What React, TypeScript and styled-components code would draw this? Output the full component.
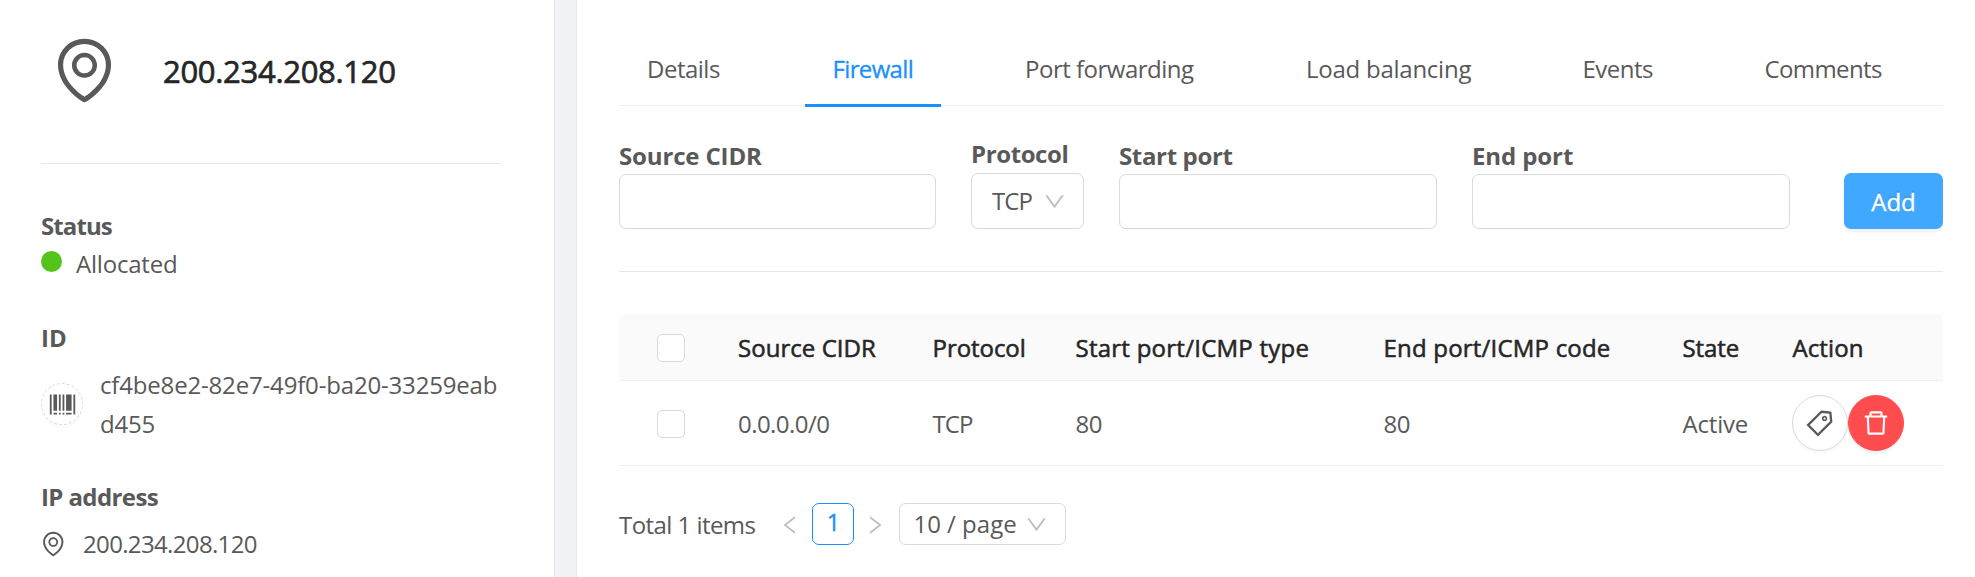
import React from 'react';
import styled, { createGlobalStyle, css } from 'styled-components';
import {
  AiOutlineBarcode,
  AiOutlineDelete,
  AiOutlineDown,
  AiOutlineEnvironment,
  AiOutlineLeft,
  AiOutlineRight,
  AiOutlineTag,
} from 'react-icons/ai';

const text = '#595959';
const heading = '#262626';
const primary = '#1890ff';
const border = '#d9d9d9';
const split = '#e8e8e8';

const GlobalStyle = createGlobalStyle`
  * { box-sizing: border-box; }
  body {
    margin: 0;
    background: #f0f2f5;
    color: ${text};
    font: 400 24px/38px 'Open Sans', 'Noto Sans', sans-serif;
    overflow: hidden;
  }
  svg { display: block; flex: none; }
`;

/* The family has no 500 face, so medium text is the regular one with a thin stroke. */
const medium = css`
  -webkit-text-stroke: 0.55px currentColor;
`;

const Page = styled.div`
  display: flex;
  height: 577px;
`;

const Sidebar = styled.aside`
  width: 555px;
  padding: 39px 53px 0 41px;
  background: #fff;
  border-right: 1px solid ${split};
`;

const Main = styled.main`
  flex: 1;
  margin-left: 21px;
  padding: 0 32px 0 42px;
  background: #fff;
  border-left: 1px solid ${split};
`;

const Text = styled.span<{ $track?: number }>`
  letter-spacing: ${(p) => p.$track ?? 0}px;
  white-space: nowrap;
`;

const ResourceHeader = styled.header`
  display: flex;
  gap: 42px;
  height: 125px;
  padding-left: 7px;
  border-bottom: 1px solid ${split};
`;

const ResourceIcon = styled.div`
  margin-top: -5px;
`;

const ResourceName = styled.h1`
  margin: 11px 0 0;
  color: ${heading};
  font-size: 31px;
  font-weight: 400;
  line-height: 42px;
  letter-spacing: -0.3px;
  -webkit-text-stroke: 0.7px currentColor;
`;

const Section = styled.section<{ $top: number }>`
  padding-top: ${(p) => p.$top}px;
`;

const SectionTitle = styled.h2<{ $track?: number }>`
  margin: 0;
  font-size: 24px;
  font-weight: 700;
  line-height: 38px;
  letter-spacing: ${(p) => p.$track ?? 0}px;
`;

const SectionRow = styled.div<{ $gap: number; $top?: number }>`
  display: flex;
  align-items: center;
  gap: ${(p) => p.$gap}px;
  margin-top: ${(p) => p.$top ?? 0}px;
`;

const StatusDot = styled.i`
  width: 21px;
  height: 21px;
  margin-bottom: 5px;
  border-radius: 50%;
  background: #52c41a;
`;

const BarcodeButton = styled.button`
  display: flex;
  align-items: center;
  justify-content: center;
  flex: none;
  width: 42px;
  height: 42px;
  padding: 0;
  border: 1px dashed ${border};
  border-radius: 50%;
  background: #fff;
  color: ${text};
  box-shadow: 0 3px 0 rgba(0, 0, 0, 0.015);
`;

const IdText = styled.div`
  line-height: 39px;
  letter-spacing: -0.17px;
  white-space: nowrap;
`;

const Tabs = styled.nav`
  display: grid;
  grid-template-columns: 185.5px 192.5px 281px 276.5px 182px 1fr;
  height: 106px;
  border-bottom: 1px solid #f0f0f0;
`;

const Tab = styled.a<{ $active?: boolean; $track: number }>`
  justify-self: start;
  height: 107px;
  padding: 50px 28px 0;
  letter-spacing: ${(p) => p.$track}px;
  white-space: nowrap;
  ${(p) =>
    p.$active &&
    css`
      color: ${primary};
      border-bottom: 3px solid ${primary};
      -webkit-text-stroke: 0.3px currentColor;
    `}
`;

const RuleForm = styled.form`
  display: grid;
  grid-template-columns: 317px 113px 318px 318px 99px;
  column-gap: 35px;
  align-items: end;
  height: 166px;
  padding-bottom: 42px;
  border-bottom: 1px solid ${split};
`;

const Field = styled.label`
  display: block;
`;

const FieldLabel = styled.div<{ $track?: number; $height?: number }>`
  height: ${(p) => p.$height ?? 37}px;
  font-weight: 700;
  letter-spacing: ${(p) => p.$track ?? 0}px;
  white-space: nowrap;
`;

const TextInput = styled.input`
  display: block;
  width: 100%;
  height: 55px;
  border: 1px solid ${border};
  border-radius: 7px;
  background: #fff;
`;

const Select = styled.div<{ $small?: boolean }>`
  display: flex;
  align-items: center;
  justify-content: space-between;
  height: ${(p) => (p.$small ? 42 : 56)}px;
  width: ${(p) => (p.$small ? '167px' : 'auto')};
  padding: ${(p) => (p.$small ? '0 16px 0 13px' : '0 16px 0 20px')};
  border: 1px solid ${border};
  border-radius: 7px;
  background: #fff;
  svg { color: #bfbfbf; }
`;

const AddButton = styled.button`
  width: 99px;
  height: 56px;
  margin-left: 19px;
  padding: 1px 0 0;
  border: 0;
  border-radius: 7px;
  background: #40a9ff;
  color: #fff;
  font: inherit;
  -webkit-text-stroke: 0.3px #fff;
  text-shadow: 0 -2px 0 rgba(0, 0, 0, 0.12);
  box-shadow: 0 3.5px 0 rgba(0, 0, 0, 0.045);
`;

const Table = styled.div`
  margin-top: 42px;
`;

const Row = styled.div<{ $head?: boolean }>`
  display: grid;
  grid-template-columns: 81px 194.5px 143px 308px 299px 110px 1fr;
  align-items: center;
  height: ${(p) => (p.$head ? 67 : 85)}px;
  padding: 2px 0 0 38px;
  border-bottom: 1px solid #f0f0f0;
  ${(p) =>
    p.$head &&
    css`
      background: #fafafa;
      color: ${heading};
      border-radius: 7px 7px 0 0;
      ${medium}
    `}
`;

const Checkbox = styled.span`
  width: 28px;
  height: 28px;
  border: 1px solid ${border};
  border-radius: 5px;
  background: #fff;
`;

const Actions = styled.div`
  display: flex;
  margin: -2px 0 0 -1px;
`;

const RoundButton = styled.button<{ $danger?: boolean }>`
  display: flex;
  align-items: center;
  justify-content: center;
  width: 56px;
  height: 56px;
  padding: 0;
  border: 1px solid ${(p) => (p.$danger ? '#ff4d4f' : border)};
  border-radius: 50%;
  background: ${(p) => (p.$danger ? '#ff4d4f' : '#fff')};
  color: ${(p) => (p.$danger ? '#fff' : text)};
  box-shadow: 0 3.5px 0 rgba(0, 0, 0, ${(p) => (p.$danger ? 0.045 : 0.016)});
`;

const Pagination = styled.div`
  display: flex;
  align-items: center;
  height: 42px;
  margin-top: 37px;
`;

const Arrow = styled.span<{ $side: 'prev' | 'next' }>`
  margin: ${(p) => (p.$side === 'prev' ? '2px 10px 0 23px' : '2px 12px 0 9px')};
  color: #bfbfbf;
`;

const PageNumber = styled.span`
  width: 42px;
  height: 42px;
  border: 1px solid ${primary};
  border-radius: 7px;
  color: ${primary};
  line-height: 36px;
  text-align: center;
  -webkit-text-stroke: 0.3px currentColor;
`;

const Total = styled(Text)`
  padding-top: 1px;
`;

export default function App() {
  return (
    <>
      <GlobalStyle />
      <Page>
        <Sidebar>
          <ResourceHeader>
            <ResourceIcon><AiOutlineEnvironment size={73} /></ResourceIcon>
            <ResourceName>200.234.208.120</ResourceName>
          </ResourceHeader>
          <Section $top={43}>
            <SectionTitle $track={-0.9}>Status</SectionTitle>
            <SectionRow $gap={14}>
              <StatusDot />
              <Text $track={-0.2}>Allocated</Text>
            </SectionRow>
          </Section>
          <Section $top={36}>
            <SectionTitle>ID</SectionTitle>
            <SectionRow $gap={17} $top={8}>
              <BarcodeButton type="button"><AiOutlineBarcode size={29} /></BarcodeButton>
              <IdText>cf4be8e2-82e7-49f0-ba20-33259eab<br />d455</IdText>
            </SectionRow>
          </Section>
          <Section $top={35}>
            <SectionTitle $track={-0.6}>IP address</SectionTitle>
            <SectionRow $gap={14} $top={9}>
              <AiOutlineEnvironment size={28} viewBox="64 0 1024 1024" />
              <Text $track={-0.65}>200.234.208.120</Text>
            </SectionRow>
          </Section>
        </Sidebar>
        <Main>
          <Tabs>
            <Tab $track={-0.5}>Details</Tab>
            <Tab $track={-0.65} $active>Firewall</Tab>
            <Tab $track={-0.5}>Port forwarding</Tab>
            <Tab $track={-0.25}>Load balancing</Tab>
            <Tab $track={-0.5}>Events</Tab>
            <Tab $track={-0.6}>Comments</Tab>
          </Tabs>
          <RuleForm>
            <Field><FieldLabel $track={-0.15}>Source CIDR</FieldLabel><TextInput /></Field>
            <Field>
              <FieldLabel $track={-0.4} $height={38}>Protocol</FieldLabel>
              <Select><Text $track={-0.9}>TCP</Text><AiOutlineDown size={25} /></Select>
            </Field>
            <Field><FieldLabel $track={-0.35}>Start port</FieldLabel><TextInput /></Field>
            <Field><FieldLabel $track={-0.1}>End port</FieldLabel><TextInput /></Field>
            <AddButton type="button">Add</AddButton>
          </RuleForm>
          <Table>
            <Row $head>
              <Checkbox />
              <Text $track={0.05}>Source CIDR</Text>
              <Text $track={-0.05}>Protocol</Text>
              <Text $track={0.25}>Start port/ICMP type</Text>
              <Text $track={0.2}>End port/ICMP code</Text>
              <Text $track={-0.1}>State</Text>
              <Text $track={0.1}>Action</Text>
            </Row>
            <Row>
              <Checkbox />
              <Text $track={-0.55}>0.0.0.0/0</Text>
              <Text $track={-0.9}>TCP</Text>
              <Text $track={-0.4}>80</Text>
              <Text $track={-0.4}>80</Text>
              <Text $track={-0.2}>Active</Text>
              <Actions>
                <RoundButton type="button"><AiOutlineTag size={31} /></RoundButton>
                <RoundButton type="button" $danger><AiOutlineDelete size={30} /></RoundButton>
              </Actions>
            </Row>
          </Table>
          <Pagination>
            <Total $track={-0.55}>Total 1 items</Total>
            <Arrow $side="prev"><AiOutlineLeft size={24} /></Arrow>
            <PageNumber>1</PageNumber>
            <Arrow $side="next"><AiOutlineRight size={24} /></Arrow>
            <Select $small><Text>10 / page</Text><AiOutlineDown size={25} /></Select>
          </Pagination>
        </Main>
      </Page>
    </>
  );
}
